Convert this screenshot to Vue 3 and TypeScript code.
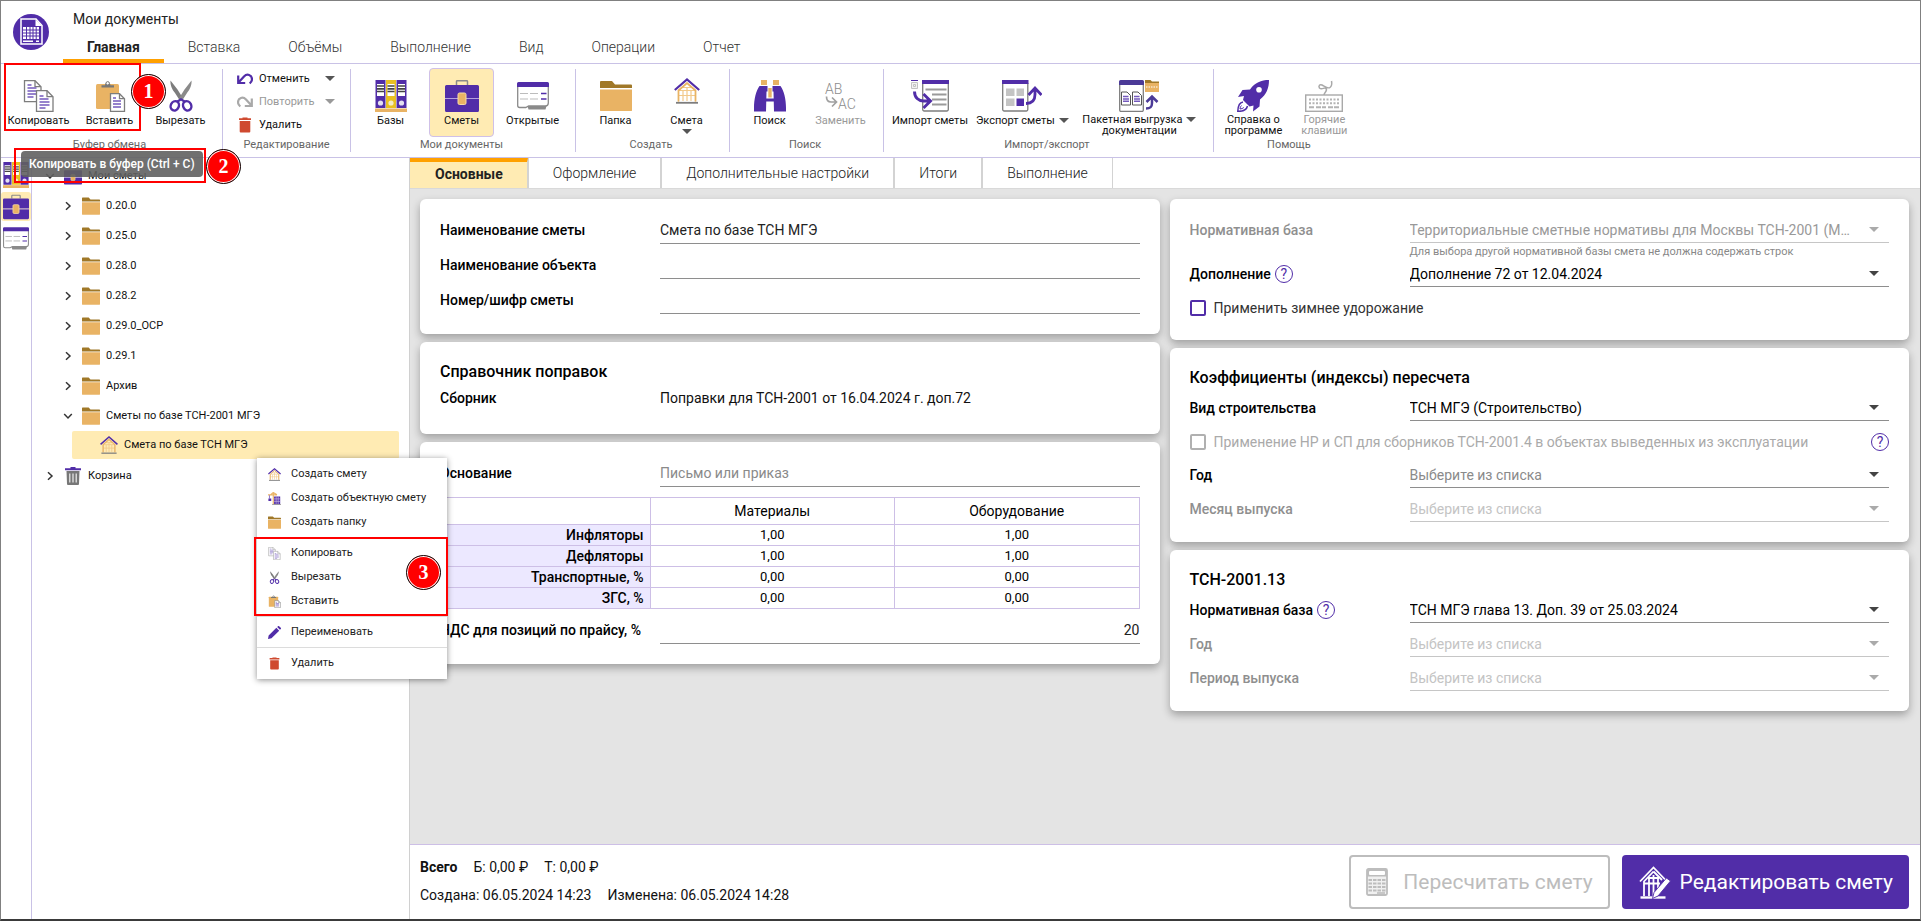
<script setup lang="ts">
import { ref } from 'vue'

interface RibbonButton {
  icon: string
  label: string
  second?: string
  arrow?: 'inline' | 'below'
  disabled?: boolean
  active?: boolean
  wide?: boolean
}
interface RibbonGroup {
  title: string
  buttons: RibbonButton[]
}
interface TreeNode {
  label: string
  icon: string
  level: number
  open?: boolean
  leaf?: boolean
}
interface MenuItem {
  icon: string
  label: string
  faded?: boolean
}

const mainTabs = ['Главная', 'Вставка', 'Объёмы', 'Выполнение', 'Вид', 'Операции', 'Отчет']
const activeMainTab = ref('Главная')

const clipboardGroup: RibbonGroup = {
  title: 'Буфер обмена',
  buttons: [
    { icon: 'copy', label: 'Копировать' },
    { icon: 'paste', label: 'Вставить' },
    { icon: 'cut', label: 'Вырезать' },
  ],
}
const groups: RibbonGroup[] = [
  {
    title: 'Мои документы',
    buttons: [
      { icon: 'binders', label: 'Базы' },
      { icon: 'case', label: 'Сметы', active: true },
      { icon: 'opened', label: 'Открытые' },
    ],
  },
  {
    title: 'Создать',
    buttons: [
      { icon: 'folder', label: 'Папка' },
      { icon: 'house', label: 'Смета', arrow: 'below' },
    ],
  },
  {
    title: 'Поиск',
    buttons: [
      { icon: 'binoculars', label: 'Поиск' },
      { icon: 'replace', label: 'Заменить', disabled: true },
    ],
  },
  {
    title: 'Импорт/экспорт',
    buttons: [
      { icon: 'import', label: 'Импорт сметы' },
      { icon: 'export', label: 'Экспорт сметы', arrow: 'inline' },
      { icon: 'batch', label: 'Пакетная выгрузка', second: 'документации', arrow: 'inline', wide: true },
    ],
  },
  {
    title: 'Помощь',
    buttons: [
      { icon: 'rocket', label: 'Справка о', second: 'программе' },
      { icon: 'keyboard', label: 'Горячие', second: 'клавиши', disabled: true },
    ],
  },
]

const tree: TreeNode[] = [
  { label: 'Мои сметы', icon: 'case', level: 0, open: true },
  { label: '0.20.0', icon: 'folder', level: 1 },
  { label: '0.25.0', icon: 'folder', level: 1 },
  { label: '0.28.0', icon: 'folder', level: 1 },
  { label: '0.28.2', icon: 'folder', level: 1 },
  { label: '0.29.0_ОСР', icon: 'folder', level: 1 },
  { label: '0.29.1', icon: 'folder', level: 1 },
  { label: 'Архив', icon: 'folder', level: 1 },
  { label: 'Сметы по базе ТСН-2001 МГЭ', icon: 'folder', level: 1, open: true },
  { label: 'Смета по базе ТСН МГЭ', icon: 'house', level: 2, leaf: true },
  { label: 'Корзина', icon: 'bin', level: 0 },
]

const menu: MenuItem[][] = [
  [
    { icon: 'house', label: 'Создать смету' },
    { icon: 'crane', label: 'Создать объектную смету' },
    { icon: 'folder', label: 'Создать папку' },
  ],
  [
    { icon: 'copy', label: 'Копировать', faded: true },
    { icon: 'cut', label: 'Вырезать' },
    { icon: 'paste', label: 'Вставить' },
  ],
  [{ icon: 'pencil', label: 'Переименовать' }],
  [{ icon: 'trash', label: 'Удалить' }],
]

const pageTabs = ['Основные', 'Оформление', 'Дополнительные настройки', 'Итоги', 'Выполнение']
const activePageTab = ref('Основные')

const estimateName = ref('Смета по базе ТСН МГЭ')
const objectName = ref('')
const estimateCode = ref('')
const basis = ref('')
const vat = ref('20')
const winter = ref(false)

const factors = [
  { name: 'Инфляторы', materials: '1,00', equipment: '1,00' },
  { name: 'Дефляторы', materials: '1,00', equipment: '1,00' },
  { name: 'Транспортные, %', materials: '0,00', equipment: '0,00' },
  { name: 'ЗГС, %', materials: '0,00', equipment: '0,00' },
]
</script>

<template>
  <div class="app">
    <svg class="sprite" aria-hidden="true">
      <symbol id="i-logo" viewBox="0 0 36 36">
        <circle cx="18" cy="18" r="18" fill="#512da8" />
        <path d="M8 5h15l6 6.500v18.500H8z" fill="#512da8" stroke="#fff" stroke-width="1.500" />
        <path d="M22.500 5.500v6.500h6.500z" fill="#fff" />
        <path d="M10 13h16v12H10z" fill="#fff" />
        <path d="M10 16h16M10 19h16M10 22h16M13.500 13v12M17 13v12M20 13v12M23.200 13v12" stroke="#512da8" />
        <path d="M10 27.300h10M23 27.300h3" stroke="#fff" stroke-width="1.500" />
      </symbol>
      <symbol id="i-copy" viewBox="0 0 32 32">
        <path d="M1.500.700h10.500l6 6v15H1.500z" fill="#fff" stroke="#7d7d7d" stroke-width="1.300" />
        <path d="M12 .700v6h6" fill="none" stroke="#7d7d7d" stroke-width="1.300" />
        <path d="M4.500 5h4M4.500 8h9M4.500 11h9M4.500 14h9M4.500 17h6" stroke="#7459bd" stroke-width="1.600" />
        <path d="M13.500 10.700h10.500l6 6v14.600H13.500z" fill="#fff" stroke="#7d7d7d" stroke-width="1.300" />
        <path d="M24 10.700v6h6" fill="none" stroke="#7d7d7d" stroke-width="1.300" />
        <path d="M16.500 16h4M16.500 19h9M16.500 22h10M16.500 25h10M16.500 28h6" stroke="#7459bd" stroke-width="1.600" />
      </symbol>
      <symbol id="i-paste" viewBox="0 0 32 32">
        <rect x="2" y="4" width="23" height="25" rx="1.500" fill="#e9b364" />
        <path d="M7.500 7.500V5.200h3.500a2.700 2.700 0 0 1 5.400 0H20v2.300z" fill="#777" />
        <circle cx="13.700" cy="3.300" r="1.700" fill="#fff" stroke="#777" />
        <path d="M16.500 13.700h9l5 5v12.600h-14z" fill="#fff" stroke="#7d7d7d" stroke-width="1.300" />
        <path d="M25.500 13.700v5h5" fill="none" stroke="#7d7d7d" stroke-width="1.300" />
        <path d="M19 18h3M19 21h8M19 24h8M19 27h8" stroke="#7459bd" stroke-width="1.500" />
      </symbol>
      <symbol id="i-cut" viewBox="0 0 32 32">
        <path d="M5.500.500c-.5 4 1.500 9 4.500 12.500l4.500 7 3-2.500-5-8z" fill="#7d7d7d" />
        <path d="M26.500.500c.5 4-1.500 9-4.500 12.500l-4.500 7-3-2.500 5-8z" fill="#8a8a8a" />
        <g fill="none" stroke="#512da8" stroke-width="2.400">
          <ellipse cx="9.800" cy="25.800" rx="4" ry="4.800" transform="rotate(25 9.800 25.800)" />
          <ellipse cx="22.200" cy="25.800" rx="4" ry="4.800" transform="rotate(-25 22.200 25.800)" />
          <path d="M12.500 21.500l3.500-2.200 3.500 2.200" />
        </g>
      </symbol>
      <symbol id="i-undo" viewBox="0 0 16 12">
        <path d="M1.200 2.500v7.500h7M1.500 9.500L7 3.500c3-3.200 8-1.800 8 2.700 0 1.800-1 3.200-2.300 4.300" fill="none" stroke="#512da8" stroke-width="2.200" />
      </symbol>
      <symbol id="i-redo" viewBox="0 0 16 12">
        <path d="M14.800 2.500v7.500h-7M14.500 9.500L9 3.500c-3-3.200-8-1.800-8 2.700 0 1.800 1 3.200 2.300 4.300" fill="none" stroke="#a9a9a9" stroke-width="2.200" />
      </symbol>
      <symbol id="i-trash" viewBox="0 0 16 16">
        <path d="M5.500 1.300V.500h5v.8H14v1.700H2V1.300zM2.700 4h10.600v10.500a1 1 0 0 1-1 1H3.700a1 1 0 0 1-1-1z" fill="#cf4a30" />
      </symbol>
      <symbol id="i-binders" viewBox="0 0 32 32">
        <path d="M.500 0h10v28h-10zM21.500 0h10v28h-10z" fill="#512da8" />
        <path d="M11 0h10v28H11z" fill="#e8c022" />
        <path d="M2 4h7v12H2zM12.500 4h7v12h-7zM23 4h7v12h-7z" fill="#fff" />
        <path d="M2 6h7M2 8.800h7M2 11.500h7M12.500 6h7M12.500 8.800h7M12.500 11.500h7M23 6h7M23 8.800h7M23 11.500h7" stroke="#444" stroke-width="1.700" />
        <circle cx="5.500" cy="23" r="2.600" fill="#e4e0f0" />
        <circle cx="16" cy="23" r="2.600" fill="#f5ecc5" />
        <circle cx="26.500" cy="23" r="2.600" fill="#e4e0f0" />
        <path d="M0 28.500h32V32H0z" fill="#e9b364" />
      </symbol>
      <symbol id="i-case" viewBox="0 0 34 32">
        <path d="M11.500 5V1.500a.8.800 0 0 1 .8-.8h9.400a.8.800 0 0 1 .8.800V5" fill="none" stroke="#8a8a8a" stroke-width="1.500" />
        <path d="M1.500 5h31A1.500 1.500 0 0 1 34 6.500V18H0V6.500A1.500 1.500 0 0 1 1.500 5zM0 19h34v11.500a1.500 1.500 0 0 1-1.500 1.500h-31A1.500 1.500 0 0 1 0 30.500z" fill="#512da8" />
        <path d="M0 18h34v1H0z" fill="#b3a0dc" />
        <rect x="13" y="13" width="8" height="11.500" rx="1.500" fill="#e9b364" stroke="#f7dca6" />
      </symbol>
      <symbol id="i-opened" viewBox="0 0 32 28">
        <path d="M.700 3v20.500a2 2 0 0 0 2 2h6l3-1.500h16.600a3 3 0 0 0 3-3V3" fill="#fff" stroke="#8a8a8a" stroke-width="1.300" />
        <path d="M1.500 0h29A1.500 1.500 0 0 1 32 1.500V5H0V1.500A1.500 1.500 0 0 1 1.500 0z" fill="#512da8" />
        <path d="M3 11.500h8M13 11.500h8M3 17h8M13 17h8" stroke="#bcbcbc" stroke-width="1.200" />
        <path d="M24 11.500h5.500M24 17h5.500" stroke="#512da8" stroke-width="1.300" />
        <path d="M10.500 24h19l-1 3.500h-17z" fill="#8a8a8a" />
      </symbol>
      <symbol id="i-folder" viewBox="0 0 32 30">
        <path d="M0 1a1 1 0 0 1 1-1h11l3 3.500h16a1 1 0 0 1 1 1V7H0z" fill="#a07828" />
        <path d="M0 8.500h32V29a1.500 1.500 0 0 1-1.500 1.500h-29A1.500 1.500 0 0 1 0 29z" fill="#e9b364" />
      </symbol>
      <symbol id="i-house" viewBox="0 0 26 26">
        <path d="M4.500 23.500V12.500L13 5l8.500 7.500v11M4.500 12.500h17M4.500 17.500h17M9 23V13M13 23V9M17 23V13M8.500 9.500h9" fill="none" stroke="#f2c98b" stroke-width="1.200" />
        <path d="M4.500 23.500V12.500L13 5.200l8.500 7.300v11" fill="none" stroke="#e9b364" stroke-width="1.700" />
        <path d="M.800 12L13 1.500 25.200 12" fill="none" stroke="#512da8" stroke-width="2.200" />
        <path d="M2 24.800h22" stroke="#7d7d7d" stroke-width="1.800" />
      </symbol>
      <symbol id="i-binoculars" viewBox="0 0 32 32">
        <path d="M7 0h6v5H7zM19 0h6v5h-6z" fill="#e9b364" />
        <path d="M5.500 6h8v5.500h-1L12 31.500H0V28C0 19 2 11 5.500 6zM26.500 6h-8v5.500h1l.5 20h12V28c0-9-2-17-5.500-22z" fill="#512da8" />
        <path d="M14.300 8h3.400v9.500h-3.400z" fill="#e9b364" />
        <path d="M12 18.500h8v3h-8z" fill="#512da8" />
      </symbol>
      <symbol id="i-import" viewBox="0 0 38 32">
        <path d="M.500 2.500h6v6h-6z" stroke="#c3c3c3" fill="#f2f2f2" />
        <path d="M2.500 4.500h2v2h-2z" stroke="#c3c3c3" fill="none" />
        <path d="M0 .500h7" stroke="#512da8" />
        <path d="M11.700 3v26.500a1.500 1.500 0 0 0 1.500 1.500h22.600a1.500 1.500 0 0 0 1.500-1.500V3" fill="#fff" stroke="#7d7d7d" stroke-width="1.300" />
        <path d="M11 0h27v4H11z" fill="#512da8" />
        <path d="M14.500 9.500h21M21 14.500h14.500M21 19.500h14.500M21 24.500h14.500" stroke="#9a9a9a" stroke-width="1.900" />
        <path d="M3.500 11.500c0 6 4 9.500 9 9.500h6M12.500 14l7 7-7 7" fill="none" stroke="#512da8" stroke-width="2.900" />
      </symbol>
      <symbol id="i-export" viewBox="0 0 40 32">
        <path d="M.700 3v26.500a1.500 1.500 0 0 0 1.500 1.500h22.100a1.500 1.500 0 0 0 1.500-1.500V3" fill="#fff" stroke="#7d7d7d" stroke-width="1.300" />
        <path d="M0 0h26.500v4H0z" fill="#512da8" />
        <path d="M4 8.500h8.500V16H4zM14.500 8.500H22V16h-7.500zM4 18.500h8.500V26H4z" fill="#c4c4c4" />
        <path d="M14.500 18.500H22V26h-7.500z" fill="#512da8" />
        <path d="M24 23.500c6 0 9-3 9-9V8.500M26.500 15l6.500-7 6.500 7" fill="none" stroke="#512da8" stroke-width="2.800" />
      </symbol>
      <symbol id="i-batch" viewBox="0 0 40 32">
        <path d="M.700 4v26a1.500 1.500 0 0 0 1.500 1.500h20.600a1.500 1.500 0 0 0 1.500-1.500V4" fill="#fff" stroke="#7d7d7d" stroke-width="1.300" />
        <path d="M1.500 0h22A1.500 1.500 0 0 1 25 1.500V5H0V1.500A1.500 1.500 0 0 1 1.500 0z" fill="#4b3a97" />
        <path d="M2.500 12h5.500l3.500 3.500V25h-9zM13.500 12H19l3.500 3.500V25h-9z" fill="#fff" stroke="#555" />
        <path d="M4 16.500h5.500M4 19h6M4 21.300h6M15 16.500h5.500M15 19h6M15 21.300h6" stroke="#7459bd" stroke-width="1.400" />
        <path d="M26 0h5.500l1.500 1.500h7v2H26z" fill="#a07828" />
        <path d="M26 3h14v9H26z" fill="#e9b364" />
        <path d="M27 7h12" stroke="#fff" stroke-dasharray="1.500 1" />
        <path d="M27 28.500c5 0 6-2 6-5.500v-5M27.500 22l5.500-5.500 5.500 5.500" fill="none" stroke="#4b3a97" stroke-width="2.500" />
      </symbol>
      <symbol id="i-rocket" viewBox="0 0 32 32">
        <path d="M32 0c-8 0-14 2.500-19 9.500L5.500 10 1 17l6-1-1 4 6.500 6.500 4-1L16 31.500l6.500-5 .5-7C29.500 14.500 32 8 32 0z" fill="#512da8" />
        <circle cx="22" cy="9.800" r="2.800" fill="#fff" />
        <path d="M6 22c-4 .5-5 4-5.200 9.300C5.500 31.500 9.500 30 10.500 26" fill="none" stroke="#512da8" stroke-width="1.500" />
        <path d="M4.500 25.500c-1 1-1.400 2.300-1.500 3.500 1.500 0 2.800-.6 3.800-1.500" fill="none" stroke="#512da8" />
      </symbol>
      <symbol id="i-keyboard" viewBox="0 0 38 32">
        <rect x=".700" y="15" width="36.600" height="16.300" fill="#fff" stroke="#a9a9a9" stroke-width="1.400" />
        <path d="M19 15c0-3 4-4 2-6.500-1.500-2-4 2-6.500-.5C13 5.500 15 4 17 5c3 1.500 6 4 8 2.500s2-4 1.500-6.500" fill="none" stroke="#a9a9a9" stroke-width="1.500" />
        <path d="M4 19.500h30M4 23.300h30" stroke="#b3b3b3" stroke-width="2" stroke-dasharray="2 1.500" />
        <path d="M4 27.300h5M11 27.300h10M23 27.300h11" stroke="#b3b3b3" stroke-width="2" stroke-dasharray="5 1" />
      </symbol>
      <symbol id="i-bin" viewBox="0 0 16 18">
        <path d="M5.500 1.200V0h5v1.200H16v2H0v-2z" fill="#512da8" />
        <path d="M1.500 4h13l-.5 13a1 1 0 0 1-1 1H3a1 1 0 0 1-1-1z" fill="#777" />
        <path d="M4.800 6.500v9M8 6.500v9M11.200 6.500v9" stroke="#eee" stroke-width="1.200" />
      </symbol>
      <symbol id="i-crane" viewBox="0 0 16 16">
        <path d="M0 3.500h11M6.500 0v15M3 3.500L6.500.500 11 3.500" fill="none" stroke="#e9b364" stroke-width="1.400" />
        <path d="M1.800 4v4" stroke="#7459bd" />
        <path d="M.500 8h3.500v3H.500zM7.500 5.500H15V15H7.500z" fill="#512da8" />
        <path d="M10 5.500V15M12.500 5.500V15M7.500 8.500H15M7.500 11.500H15" stroke="#cfc3ea" stroke-width=".800" />
        <path d="M5 15.500h11" stroke="#888" />
      </symbol>
      <symbol id="i-pencil" viewBox="0 0 16 16">
        <path d="M0 16l.8-4.300L10.300 2.200l3.500 3.500-9.500 9.500zM11.300 1.300l1-1a1 1 0 0 1 1.400 0l2 2a1 1 0 0 1 0 1.400l-1 1z" fill="#512da8" />
      </symbol>
      <symbol id="i-calc" viewBox="0 0 22 28">
        <rect x="1" y="1" width="20" height="26" rx="1.500" fill="#f0f0f0" stroke="#bdbdbd" stroke-width="1.800" />
        <path d="M1 1h20v7.500H1z" fill="#bdbdbd" />
        <rect x="3" y="3" width="16" height="4" rx="1" fill="#fff" />
        <path d="M2.500 12h17M2.500 15.500h17M2.500 19h17M2.500 22.500h17" stroke="#bdbdbd" stroke-width="2.200" stroke-dasharray="3.500 1" />
        <path d="M11 25h8" stroke="#bdbdbd" stroke-width="1.600" />
      </symbol>
      <symbol id="i-edit-house" viewBox="0 0 32 34">
        <path d="M1 16.500L14.500 2.500 28 16.500M14.500 6.500L5 16.500V31M14.500 6.500L23 15M5 18.500h16M10 31V14M14.500 31V10M19 26V14M9 13h11" fill="none" stroke="#fff" stroke-width="1.800" />
        <path d="M1.500 32.500h25" stroke="#fff" stroke-width="2.400" />
        <path d="M13.500 33.500l1.500-6L27.500 13l4 3L19 31z" fill="#fff" stroke="#512da8" stroke-width=".900" />
      </symbol>
      <symbol id="i-right" viewBox="0 0 10 10">
        <path d="M3 1.200L7 5 3 8.800" fill="none" stroke="#333" stroke-width="1.500" />
      </symbol>
      <symbol id="i-down" viewBox="0 0 10 10">
        <path d="M1.200 3L5 7l3.800-4" fill="none" stroke="#333" stroke-width="1.500" />
      </symbol>
    </svg>

    <header class="top">
      <svg class="logo"><use href="#i-logo" /></svg>
      <div class="top-text">
        <h1>Мои документы</h1>
        <nav class="main-tabs">
          <button
            v-for="t in mainTabs"
            :key="t"
            type="button"
            :class="{ active: t === activeMainTab }"
            @click="activeMainTab = t"
          >{{ t }}</button>
        </nav>
      </div>
    </header>

    <section class="ribbon">
      <div class="group first">
        <div class="buttons">
          <button v-for="b in clipboardGroup.buttons" :key="b.label" type="button" class="tool">
            <span class="tool-icon"><svg :class="'ic-' + b.icon"><use :href="'#i-' + b.icon" /></svg></span>
            <span>{{ b.label }}</span>
          </button>
        </div>
        <div class="group-title">{{ clipboardGroup.title }}</div>
      </div>

      <div class="group edit">
        <div class="edit-list">
          <button type="button"><svg class="ic-undo"><use href="#i-undo" /></svg><span>Отменить</span><i class="tri"></i></button>
          <button type="button" disabled><svg class="ic-undo"><use href="#i-redo" /></svg><span>Повторить</span><i class="tri"></i></button>
          <button type="button"><svg class="ic-trash"><use href="#i-trash" /></svg><span>Удалить</span></button>
        </div>
        <div class="group-title">Редактирование</div>
      </div>

      <div v-for="g in groups" :key="g.title" class="group">
        <div class="buttons">
          <button
            v-for="b in g.buttons"
            :key="b.label"
            type="button"
            class="tool"
            :class="{ active: b.active, wide: b.wide }"
            :disabled="b.disabled"
          >
            <span class="tool-icon">
              <svg v-if="b.icon === 'replace'" class="ic-replace" viewBox="0 0 36 32">
                <text x="2" y="14" font-size="14" font-weight="300" fill="#8d8d8d">AB</text>
                <text x="15" y="29" font-size="14" font-weight="300" fill="#8d8d8d">AC</text>
                <path d="M3.500 16.500c0 4 1.500 5.500 4.500 5.500h4.500M9 17.500l4.500 4.500-4.500 4.500" fill="none" stroke="#a0a0a0" stroke-width="1.700" />
              </svg>
              <svg v-else :class="'ic-' + b.icon"><use :href="'#i-' + b.icon" /></svg>
            </span>
            <span class="tool-line">{{ b.label }}<i v-if="b.arrow === 'inline'" class="tri"></i></span>
            <span v-if="b.second">{{ b.second }}</span>
            <i v-if="b.arrow === 'below'" class="tri below"></i>
          </button>
        </div>
        <div class="group-title">{{ g.title }}</div>
      </div>
    </section>

    <div class="body">
      <nav class="rail">
        <button type="button" aria-label="Базы"><svg class="r-binders"><use href="#i-binders" /></svg></button>
        <button type="button" aria-label="Сметы" class="active"><svg class="r-case"><use href="#i-case" /></svg></button>
        <button type="button" aria-label="Открытые"><svg class="r-opened"><use href="#i-opened" /></svg></button>
      </nav>

      <aside class="tree">
        <button
          v-for="n in tree"
          :key="n.label"
          type="button"
          class="node"
          :class="['level-' + n.level, { selected: n.leaf }]"
        >
          <svg v-if="!n.leaf" class="chevron"><use :href="n.open ? '#i-down' : '#i-right'" /></svg>
          <svg class="node-icon"><use :href="'#i-' + n.icon" /></svg>
          <span>{{ n.label }}</span>
        </button>
      </aside>

      <main class="page">
        <nav class="page-tabs">
          <button
            v-for="t in pageTabs"
            :key="t"
            type="button"
            :class="{ active: t === activePageTab }"
            @click="activePageTab = t"
          >{{ t }}</button>
        </nav>

        <div class="cards">
          <div class="column">
            <section class="card">
              <div class="row"><label for="f-name">Наименование сметы</label><input id="f-name" v-model="estimateName" type="text" /></div>
              <div class="row"><label for="f-object">Наименование объекта</label><input id="f-object" v-model="objectName" type="text" /></div>
              <div class="row"><label for="f-code">Номер/шифр сметы</label><input id="f-code" v-model="estimateCode" type="text" /></div>
            </section>

            <section class="card book">
              <h2>Справочник поправок</h2>
              <div class="row"><strong>Сборник</strong><span>Поправки для ТСН-2001 от 16.04.2024 г. доп.72</span></div>
            </section>

            <section class="card">
              <div class="row"><label for="f-basis">Основание</label><input id="f-basis" v-model="basis" type="text" placeholder="Письмо или приказ" /></div>
              <table>
                <thead>
                  <tr><td></td><th scope="col">Материалы</th><th scope="col">Оборудование</th></tr>
                </thead>
                <tbody>
                  <tr v-for="f in factors" :key="f.name">
                    <th scope="row">{{ f.name }}</th>
                    <td>{{ f.materials }}</td>
                    <td>{{ f.equipment }}</td>
                  </tr>
                </tbody>
              </table>
              <div class="row"><label for="f-vat">НДС для позиций по прайсу, %</label><input id="f-vat" v-model="vat" type="text" class="number" /></div>
            </section>
          </div>

          <div class="column right">
            <section class="card norm">
              <div class="row off">
                <label for="s-base">Нормативная база</label>
                <div class="select"><select id="s-base" disabled><option>Территориальные сметные нормативы для Москвы ТСН-2001 (М…</option></select></div>
              </div>
              <p class="hint">Для выбора другой нормативной базы смета не должна содержать строк</p>
              <div class="row">
                <div class="with-help"><label for="s-add">Дополнение</label><button type="button" class="help" aria-label="Справка">?</button></div>
                <div class="select"><select id="s-add"><option>Дополнение 72 от 12.04.2024</option></select></div>
              </div>
              <div class="check"><label><input v-model="winter" type="checkbox" />Применить зимнее удорожание</label></div>
            </section>

            <section class="card">
              <h2>Коэффициенты (индексы) пересчета</h2>
              <div class="row">
                <label for="s-kind">Вид строительства</label>
                <div class="select"><select id="s-kind"><option>ТСН МГЭ (Строительство)</option></select></div>
              </div>
              <div class="check off">
                <label><input type="checkbox" disabled />Применение НР и СП для сборников ТСН-2001.4 в объектах выведенных из эксплуатации</label>
                <button type="button" class="help" aria-label="Справка">?</button>
              </div>
              <div class="row">
                <label for="s-year">Год</label>
                <div class="select empty"><select id="s-year"><option>Выберите из списка</option></select></div>
              </div>
              <div class="row off">
                <label for="s-month">Месяц выпуска</label>
                <div class="select empty"><select id="s-month" disabled><option>Выберите из списка</option></select></div>
              </div>
            </section>

            <section class="card">
              <h2>ТСН-2001.13</h2>
              <div class="row">
                <div class="with-help"><label for="s-base13">Нормативная база</label><button type="button" class="help" aria-label="Справка">?</button></div>
                <div class="select"><select id="s-base13"><option>ТСН МГЭ глава 13. Доп. 39 от 25.03.2024</option></select></div>
              </div>
              <div class="row off">
                <label for="s-year13">Год</label>
                <div class="select empty"><select id="s-year13" disabled><option>Выберите из списка</option></select></div>
              </div>
              <div class="row off">
                <label for="s-period13">Период выпуска</label>
                <div class="select empty"><select id="s-period13" disabled><option>Выберите из списка</option></select></div>
              </div>
            </section>
          </div>
        </div>

        <footer class="footer">
          <div class="totals">
            <p><strong>Всего</strong><span>Б: 0,00 ₽</span><span>Т: 0,00 ₽</span></p>
            <p><span>Создана: 06.05.2024 14:23</span><span>Изменена: 06.05.2024 14:28</span></p>
          </div>
          <div class="actions">
            <button type="button" class="recalc" disabled><svg class="ic-calc"><use href="#i-calc" /></svg>Пересчитать смету</button>
            <button type="button" class="edit-btn"><svg class="ic-edit"><use href="#i-edit-house" /></svg>Редактировать смету</button>
          </div>
        </footer>
      </main>
    </div>

    <div class="tooltip" role="tooltip">Копировать в буфер (Ctrl + C)</div>

    <div class="menu" role="menu">
      <div v-for="(part, i) in menu" :key="i" class="menu-part" role="group">
        <button v-for="m in part" :key="m.label" type="button" role="menuitem">
          <svg :class="{ faded: m.faded }"><use :href="'#i-' + m.icon" /></svg>{{ m.label }}
        </button>
      </div>
    </div>

    <div class="frame frame-1"></div>
    <div class="frame frame-2"></div>
    <div class="frame frame-3"></div>
    <div class="mark mark-1">1</div>
    <div class="mark mark-2">2</div>
    <div class="mark mark-3">3</div>
  </div>
</template>

<style>
body {
  margin: 0;
}
</style>

<style scoped>
.app,
.app * {
  box-sizing: border-box;
}
.app {
  position: relative;
  display: flex;
  flex-direction: column;
  min-height: 100vh;
  border: 1px solid #808080;
  border-bottom: 2px solid #3a3a3a;
  background: #fff;
  color: #111;
  font: 14px/20px Roboto, "Noto Sans", sans-serif;
}
.sprite {
  position: absolute;
  width: 0;
  height: 0;
}
button {
  margin: 0;
  padding: 0;
  border: 0;
  background: none;
  color: inherit;
  font: inherit;
  cursor: pointer;
}
button:disabled {
  cursor: default;
}
h1,
h2,
p {
  margin: 0;
}
svg {
  flex: none;
}

.top {
  display: flex;
  height: 63px;
  border-bottom: 1px solid #c9c2e6;
}
.logo {
  width: 36px;
  height: 36px;
  margin: 13px 14px 0 12px;
}
.top-text {
  display: flex;
  flex-direction: column;
  justify-content: space-between;
}
h1 {
  padding: 8px 0 0 10px;
  color: #222;
  font-size: 14px;
  font-weight: 400;
  line-height: 20px;
}
.main-tabs {
  display: flex;
}
.main-tabs button {
  height: 28px;
  padding: 0 24px;
  border-bottom: 4px solid transparent;
  color: #333;
  font-size: 14px;
  font-weight: 300;
  line-height: 24px;
}
.main-tabs button.active {
  border-color: #ffa000;
  color: #222;
  font-weight: 700;
}

.ribbon {
  display: flex;
  height: 94px;
  border-bottom: 1px solid #c9c2e6;
}
.group {
  display: flex;
  flex-direction: column;
  justify-content: space-between;
  height: 83px;
  margin-top: 5px;
  padding: 0 10px 0 7px;
  border-right: 1px solid #c9c2e6;
}
.group:last-child {
  border-right: 0;
}
.group.first {
  padding: 0 9px 0 5px;
}
.buttons {
  display: flex;
  gap: 6px;
  height: 68px;
}
.tool {
  display: flex;
  flex-direction: column;
  align-items: center;
  min-width: 65px;
  height: 69px;
  margin-top: -1px;
  padding: 8px 0 0;
  border: 1px solid transparent;
  border-radius: 4px;
  font-size: 11px;
  line-height: 11px;
  white-space: nowrap;
}
.tool.wide {
  min-width: 127px;
}
.tool.active {
  border-color: #cfc0e8;
  background: #ffebb3;
}
.tool-icon {
  display: flex;
  align-items: center;
  justify-content: center;
  height: 38px;
}
.tool-line {
  display: flex;
  align-items: center;
  gap: 4px;
}
.tool:disabled,
.edit-list button:disabled {
  color: #999;
}
.tri {
  width: 0;
  height: 0;
  border: 5px solid transparent;
  border-top-color: #555;
  border-bottom: 0;
}
:disabled .tri {
  border-top-color: #999;
}
.tri.below {
  margin-top: 3px;
}
.group-title {
  color: #666;
  font-size: 11px;
  line-height: 14px;
  text-align: center;
  white-space: nowrap;
}
.ic-copy,
.ic-paste,
.ic-cut,
.ic-binders,
.ic-binoculars,
.ic-rocket {
  width: 32px;
  height: 32px;
}
.ic-case {
  width: 34px;
  height: 32px;
}
.ic-opened {
  width: 32px;
  height: 28px;
}
.ic-folder {
  width: 32px;
  height: 30px;
}
.ic-house {
  width: 26px;
  height: 36px;
  padding-bottom: 10px;
}
.ic-replace {
  width: 36px;
  height: 32px;
}
.ic-import,
.ic-keyboard {
  width: 38px;
  height: 32px;
}
.ic-export,
.ic-batch {
  width: 40px;
  height: 32px;
}
.group.edit {
  width: 128px;
  padding: 0;
}
.edit-list {
  margin-top: -2px;
  padding-left: 14px;
}
.edit-list button {
  display: flex;
  align-items: center;
  width: 98px;
  height: 23px;
  font-size: 11px;
}
.edit-list span {
  flex: 1;
  text-align: left;
}
.ic-undo {
  width: 16px;
  height: 12px;
  margin-right: 6px;
}
.ic-trash {
  width: 16px;
  height: 16px;
  margin-right: 6px;
}

.body {
  display: flex;
  flex: 1;
}
.rail {
  display: flex;
  flex-direction: column;
  gap: 3px;
  width: 31px;
  padding-top: 2px;
  border-right: 1px solid #c9c2e6;
}
.rail button {
  display: flex;
  align-items: center;
  justify-content: center;
  height: 29px;
  border-radius: 3px;
}
.rail button.active {
  background: #ffebb3;
}
.r-binders,
.r-case {
  width: 26px;
  height: 26px;
}
.r-opened {
  width: 26px;
  height: 23px;
}
.tree {
  display: flex;
  flex-direction: column;
  width: 377px;
  padding: 3px 10px 0 13px;
}
.node {
  display: flex;
  align-items: center;
  height: 30px;
  font-size: 11px;
  text-align: left;
}
.node.level-1 {
  padding-left: 18px;
}
.node.selected {
  height: 28px;
  margin: 0 0 2px 27px;
  padding-left: 28px;
  border-radius: 2px;
  background: #ffebb3;
}
.chevron {
  width: 10px;
  height: 10px;
  margin-right: 9px;
}
.node-icon {
  width: 18px;
  height: 18px;
  margin-right: 6px;
}

.page {
  display: flex;
  flex: 1;
  flex-direction: column;
  min-width: 0;
  border-left: 1px solid #d0d0d0;
  background: #e4e4e4;
}
.page-tabs {
  display: flex;
  border-bottom: 1px solid #d9d9d9;
  background: #fff;
}
.page-tabs button {
  height: 30px;
  padding: 0 24px;
  border: solid #d3d3d3;
  border-width: 0 1px;
  color: #222;
  font-size: 14px;
  font-weight: 300;
}
.page-tabs button.active {
  padding: 0 24px 2px 25px;
  border-top: 4px solid #ffa000;
  border-left: 0;
  background: #ffebb3;
  font-weight: 700;
}
.cards {
  display: grid;
  flex: 1;
  grid-template-columns: 1fr 1fr;
  align-items: start;
  gap: 10px;
  padding: 10px 11px 10px 10px;
}
.column {
  display: grid;
  gap: 8px;
}
.card {
  display: flex;
  flex-direction: column;
  padding: 17px 20px 20px;
  border-radius: 6px;
  background: #fff;
  box-shadow: 0 4px 8px rgba(0, 0, 0, 0.3);
}
.row {
  display: grid;
  grid-template-columns: 220px 1fr;
  height: 28px;
  line-height: 28px;
}
.right .row {
  height: 27px;
}
.row + .row {
  margin-top: 7px;
}
.row label,
.row strong {
  color: #000;
  font-weight: 500;
  white-space: nowrap;
}
.row.off label {
  color: #8f8f8f;
}
input[type="text"],
select {
  width: 100%;
  height: 100%;
  margin: 0;
  padding: 0;
  border: 0;
  border-bottom: 1px solid #8e8e8e;
  border-radius: 0;
  outline: 0;
  background: none;
  color: #222;
  font: inherit;
  font-weight: 400;
}
input::placeholder {
  color: #8a8a8a;
  opacity: 1;
}
.number {
  text-align: right;
}
.select {
  position: relative;
  height: 27px;
}
.select::after {
  position: absolute;
  top: 11px;
  right: 10px;
  border: 5px solid transparent;
  border-top-color: #444;
  border-bottom: 0;
  content: "";
}
.off .select::after {
  border-top-color: #aaa;
}
select {
  appearance: none;
  color: #000;
}
select:disabled {
  border-color: #c6c6c6;
  color: #999;
  opacity: 1;
}
.empty select {
  color: #8a8a8a;
}
.empty select:disabled {
  color: #c4c4c4;
}
h2 {
  padding-top: 1px;
  color: #000;
  font-size: 16px;
  font-weight: 500;
  line-height: 24px;
}
.right h2 {
  margin-bottom: 4px;
}
.book {
  padding-bottom: 22px;
}
.hint {
  padding-left: 220px;
  color: #888;
  font-size: 11px;
  line-height: 17px;
}
.with-help {
  display: flex;
  align-items: center;
  gap: 4px;
}
.help {
  width: 18px;
  height: 18px;
  border: 1px solid #512da8;
  border-radius: 50%;
  color: #512da8;
  font-size: 14px;
  font-weight: 400;
  line-height: 16px;
  text-align: center;
}
.check {
  display: flex;
  align-items: center;
  justify-content: space-between;
  height: 16px;
  margin: 13px 0 11px;
}
.norm {
  padding-bottom: 13px;
}
.check label {
  display: flex;
  align-items: center;
  gap: 8px;
  color: #333;
}
.check.off label {
  color: #aaa;
}
input[type="checkbox"] {
  width: 16px;
  height: 16px;
  margin: 0;
  appearance: none;
  border: 2px solid #512da8;
  border-radius: 2px;
}
input[type="checkbox"]:checked {
  background: #512da8;
}
input[type="checkbox"]:disabled {
  border-color: #b0b0b0;
}
table {
  width: 100%;
  margin: 10px 0 7px;
  border-collapse: collapse;
  table-layout: fixed;
}
th,
td {
  height: 21px;
  padding: 0;
  border: 1px solid #cdbfe6;
  color: #000;
  font-size: 13px;
  font-weight: 400;
  line-height: 18px;
  text-align: center;
}
thead th,
thead td {
  height: 27px;
  font-size: 14px;
}
thead td {
  width: 30%;
}
tbody th {
  padding-right: 6px;
  background: #ece8ff;
  font-size: 14px;
  font-weight: 500;
  text-align: right;
}

.footer {
  display: flex;
  justify-content: space-between;
  height: 75px;
  padding: 10px 11px 0 10px;
  border-top: 1px solid #cdbfe6;
  background: #fff;
}
.totals p {
  display: flex;
  gap: 16px;
  height: 28px;
  line-height: 24px;
}
.totals strong {
  font-weight: 700;
}
.actions {
  display: flex;
  gap: 12px;
}
.actions button {
  display: flex;
  align-items: center;
  height: 54px;
  border-radius: 4px;
  font-size: 21px;
}
.recalc {
  gap: 15px;
  padding: 0 15px;
  border: 2px solid #bdbdbd;
  color: #bdbdbd;
}
.edit-btn {
  gap: 9px;
  padding: 0 16px 0 17px;
  background: #512da8;
  color: #fff;
}
.ic-calc {
  width: 22px;
  height: 28px;
}
.ic-edit {
  width: 32px;
  height: 34px;
}

.tooltip {
  position: absolute;
  top: 150px;
  left: 20px;
  padding: 3px 8px;
  border-radius: 4px;
  background: rgba(97, 97, 97, 0.9);
  color: #fff;
  font-size: 12px;
  font-weight: 500;
  white-space: nowrap;
}
.menu {
  position: absolute;
  top: 457px;
  left: 256px;
  width: 190px;
  padding: 4px 0;
  background: #fff;
  box-shadow: 0 1px 6px rgba(0, 0, 0, 0.45);
}
.menu-part + .menu-part {
  margin-top: 3px;
  padding-top: 3px;
  border-top: 1px solid #dcdcdc;
}
.menu button {
  display: flex;
  align-items: center;
  gap: 10px;
  width: 100%;
  height: 24px;
  padding-left: 11px;
  color: #222;
  font-size: 11px;
  text-align: left;
}
.menu svg {
  width: 13px;
  height: 13px;
}
.menu .faded {
  opacity: 0.75;
}
.frame {
  position: absolute;
  border: 2px solid #f00;
  pointer-events: none;
}
.frame-1 {
  top: 62px;
  left: 3px;
  width: 137px;
  height: 68px;
}
.frame-2 {
  top: 147px;
  left: 13px;
  width: 192px;
  height: 35px;
}
.frame-3 {
  top: 536px;
  left: 253px;
  width: 194px;
  height: 79px;
}
.mark {
  position: absolute;
  width: 35px;
  height: 35px;
  border: 1px solid #111;
  border-radius: 50%;
  background: #f00;
  box-shadow: inset 0 0 0 1px #fff;
  color: #fff;
  font: bold 20px/33px "Liberation Serif", serif;
  text-align: center;
}
.mark-1 {
  top: 73px;
  left: 130px;
}
.mark-2 {
  top: 148px;
  left: 205px;
}
.mark-3 {
  top: 554px;
  left: 405px;
}
</style>
